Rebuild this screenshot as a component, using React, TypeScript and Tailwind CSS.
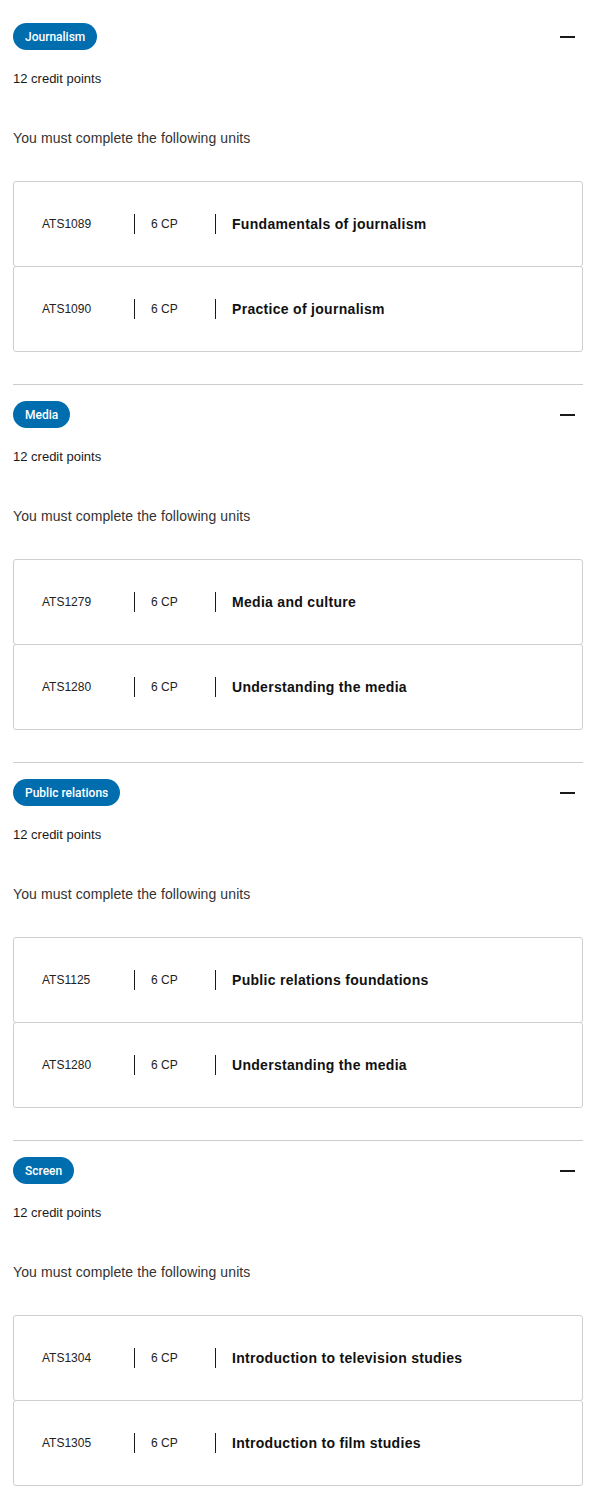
const sections = [
  {
    name: "Journalism",
    units: [
      { code: "ATS1089", cp: "6 CP", title: "Fundamentals of journalism" },
      { code: "ATS1090", cp: "6 CP", title: "Practice of journalism" },
    ],
  },
  {
    name: "Media",
    units: [
      { code: "ATS1279", cp: "6 CP", title: "Media and culture" },
      { code: "ATS1280", cp: "6 CP", title: "Understanding the media" },
    ],
  },
  {
    name: "Public relations",
    units: [
      { code: "ATS1125", cp: "6 CP", title: "Public relations foundations" },
      { code: "ATS1280", cp: "6 CP", title: "Understanding the media" },
    ],
  },
  {
    name: "Screen",
    units: [
      { code: "ATS1304", cp: "6 CP", title: "Introduction to television studies" },
      { code: "ATS1305", cp: "6 CP", title: "Introduction to film studies" },
    ],
  },
];

const App = () => {
  return (
    <div className="bg-white pl-[13px] pr-[15px] pb-[8px] text-[#1a1a1a] font-['Liberation_Sans',Arial,sans-serif]">
      {sections.map((section, idx) => (
        <section
          key={section.name}
          className={idx === 0 ? "pt-[23px] pb-[32px]" : "border-t border-[#cccccc] pt-[16px] pb-[32px]"}
        >
          <div className="flex items-center justify-between">
            <span className="inline-flex h-[27px] items-center rounded-full bg-[#006dae] px-3 font-['Roboto',sans-serif] text-[12px] font-medium text-white">
              {section.name}
            </span>
            <span className="mr-[8px] block h-[2px] w-[15px] bg-[#1a1a1a]" />
          </div>
          <p className="mt-[19px] text-[13px] leading-[20px]">12 credit points</p>
          <p className="mt-[39px] text-[14px] leading-[20px] tracking-[0.1px] text-[#333]">
            You must complete the following units
          </p>
          <div className="mt-[33px]">
            {section.units.map((unit, i) => (
              <div
                key={unit.code + i}
                className={`flex h-[86px] items-center rounded-[3px] border border-[#cfcfcf] pl-[28px] ${i > 0 ? "-mt-px" : ""}`}
              >
                <span className="w-[92px] text-[12px] text-[#222]">{unit.code}</span>
                <span className="h-[20px] w-px bg-[#1a1a1a]" />
                <span className="w-[80px] pl-[16px] text-[12px] text-[#222]">{unit.cp}</span>
                <span className="h-[20px] w-px bg-[#1a1a1a]" />
                <span className="pt-px pl-[16px] text-[14px] font-bold tracking-[0.3px] text-[#111]">
                  {unit.title}
                </span>
              </div>
            ))}
          </div>
        </section>
      ))}
    </div>
  );
};

export default App;
